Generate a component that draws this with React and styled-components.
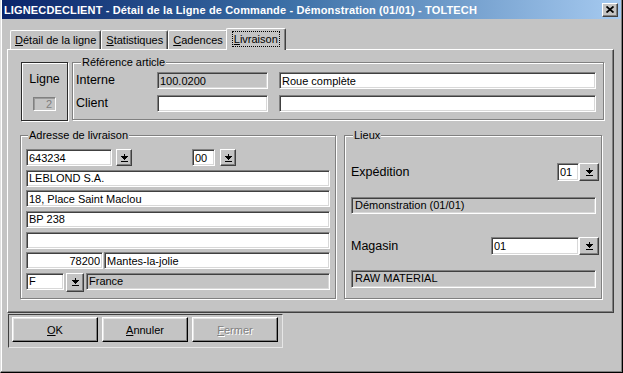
import React from 'react';
import styled, { createGlobalStyle } from 'styled-components';

const FACE = '#c4c4c4';
const SHADOW = '#808080';
const DARK = '#404040';

const Global = createGlobalStyle`
  html, body { margin: 0; padding: 0; background: ${FACE}; }
  body { font-family: "Liberation Sans", Arial, sans-serif; font-size: 11px; color: #000; }
  * { box-sizing: border-box; }
`;

const Window = styled.div`
  width: 623px;
  height: 373px;
  background: ${FACE};
  border-left: 1px solid #dfdfdf;
  border-right: 1px solid #000;
  border-bottom: 1px solid #000;
  box-shadow: inset -1px -1px 0 ${SHADOW}, inset 1px 0 0 #fff;
  padding: 0 1px 1px 1px;
  display: flex;
  flex-direction: column;
`;

const TitleBar = styled.div`
  height: 19px;
  flex: none;
  display: flex;
  align-items: center;
  padding: 0 3px 0 2px;
  background: linear-gradient(to right, #0a246a 0%, #3a6ea5 45%, #a6caf0 100%);
`;

const TitleText = styled.div`
  flex: 1;
  color: #fff;
  font-weight: bold;
  font-size: 11px;
  letter-spacing: 0.14px;
  white-space: nowrap;
`;

const CloseButton = styled.button`
  width: 16px;
  height: 14px;
  padding: 0;
  margin: 0;
  background: ${FACE};
  border: 1px solid;
  border-color: #fff ${DARK} ${DARK} #fff;
  box-shadow: inset -1px -1px 0 ${SHADOW};
  display: flex;
  align-items: center;
  justify-content: center;
`;

const Body = styled.div`
  flex: 1;
  display: flex;
  flex-direction: column;
  padding: 9px 7px 0 5px;
`;

const TabStrip = styled.div`
  display: flex;
  align-items: flex-end;
  height: 21px;
  padding-left: 3px;
  position: relative;
  z-index: 2;
`;

const Tab = styled.div`
  height: ${p => (p.$active ? '22px' : '19px')};
  margin: ${p => (p.$active ? '0 -2px -1px -2px' : '0')};
  padding: ${p => (p.$active ? '0 5px' : '0 4px')};
  background: ${FACE};
  border-top: 1px solid #fff;
  border-left: 1px solid #fff;
  border-right: 1px solid ${DARK};
  box-shadow: inset -1px 0 0 ${SHADOW};
  border-radius: 2px 2px 0 0;
  display: flex;
  align-items: ${p => (p.$active ? 'flex-start' : 'center')};
  padding-top: ${p => (p.$active ? '2px' : '0')};
  font-size: 11px;
  white-space: nowrap;
  position: relative;
  z-index: ${p => (p.$active ? 3 : 1)};
`;

const FocusRect = styled.span`
  border: 1px dotted #000;
  padding: 0 1px;
  line-height: 14px;
`;

const Panel = styled.div`
  height: 264px;
  background: ${FACE};
  border-top: 1px solid #fff;
  border-left: 1px solid #fff;
  border-right: 1px solid ${DARK};
  border-bottom: 1px solid ${DARK};
  box-shadow: inset -1px -1px 0 ${SHADOW};
  padding: 12px 9px 0 13px;
  display: flex;
  flex-direction: column;
  position: relative;
  z-index: 1;
`;

const TopRow = styled.div`
  display: flex;
  gap: 4px;
`;

const LigneBox = styled.div`
  width: 47px;
  height: 59px;
  border: 1px solid #2a2a2a;
  box-shadow: inset 1px 1px 0 #fff, 1px 1px 0 #fff;
  display: flex;
  flex-direction: column;
  align-items: center;
  padding-top: 9px;
`;

const BigLabel = styled.div`
  font-size: 12.5px;
  line-height: 15px;
  white-space: nowrap;
  flex: ${p => (p.$grow ? 1 : 'none')};
`;

const SmallField = styled.div`
  margin-top: 10px;
  width: 23px;
  height: 14px;
  border: 1px solid;
  border-color: ${SHADOW} #fff #fff ${SHADOW};
  box-shadow: inset 1px 1px 0 #9a9a9a;
  color: ${SHADOW};
  text-align: right;
  padding-right: 3px;
  font-size: 11px;
  line-height: 12px;
`;

const GroupBox = styled.div`
  position: relative;
  border: 1px solid ${SHADOW};
  box-shadow: inset 1px 1px 0 #fff, 1px 1px 0 #fff;
  height: ${p => p.$h}px;
  width: ${p => (p.$w ? `${p.$w}px` : 'auto')};
  flex: ${p => (p.$w ? 'none' : 1)};
`;

const Legend = styled.span`
  position: absolute;
  top: -7px;
  left: ${p => p.$left || 7}px;
  padding: 0 1px;
  background: ${FACE};
  font-size: 11px;
  line-height: 13px;
  white-space: nowrap;
`;

const RefGrid = styled.div`
  display: grid;
  grid-template-columns: 70px 111px 1fr;
  grid-auto-rows: 17px;
  column-gap: 11px;
  row-gap: 6px;
  padding: 9px 7px 0 3px;
  align-items: center;
`;

const Field = styled.input`
  display: block;
  height: ${p => p.$h || 17}px;
  width: ${p => (p.$w ? `${p.$w}px` : '100%')};
  flex: ${p => (p.$grow ? '1 1 auto' : 'none')};
  min-width: 0;
  margin: 0;
  margin-left: ${p => p.$ml || 0}px;
  padding: 0 2px;
  font-family: "Liberation Sans", Arial, sans-serif;
  font-size: 11px;
  color: #000;
  text-align: ${p => p.$align || 'left'};
  background: ${p => (p.$off ? FACE : '#fff')};
  border: 1px solid;
  border-color: ${SHADOW} #fff #fff ${SHADOW};
  box-shadow: inset 1px 1px 0 ${DARK}, inset -1px -1px 0 #d8d8d8;
  outline: none;
`;

const BottomRow = styled.div`
  display: flex;
  gap: 8px;
  margin-top: 14px;
  margin-left: -1px;
  margin-right: 2px;
`;

const AddressStack = styled.div`
  display: flex;
  flex-direction: column;
  gap: 3.67px;
  padding: 13px 5px 0 5px;
`;

const Line = styled.div`
  display: flex;
  align-items: flex-start;
  gap: ${p => p.$gap || 0}px;
`;

const DropButton = styled.button`
  flex: none;
  width: ${p => p.$w || 16}px;
  height: ${p => p.$h || 17}px;
  margin: 0;
  margin-left: ${p => p.$ml || 0}px;
  padding: 0;
  background: ${FACE};
  border: 1px solid;
  border-color: #fff ${DARK} ${DARK} #fff;
  box-shadow: inset -1px -1px 0 ${SHADOW};
  display: flex;
  align-items: center;
  justify-content: center;
`;

const LieuxStack = styled.div`
  display: flex;
  flex-direction: column;
  padding: 27px 2px 0 6px;
`;

const PlaceRow = styled.div`
  display: flex;
  align-items: center;
  height: 18px;
  margin-top: ${p => p.$mt || 0}px;
`;

const InfoBox = styled.div`
  height: ${p => p.$h || 17}px;
  margin-top: ${p => p.$mt || 0}px;
  margin-right: 3px;
  border: 1px solid;
  border-color: ${SHADOW} #fff #fff ${SHADOW};
  box-shadow: inset 1px 1px 0 ${DARK}, inset -1px -1px 0 #d8d8d8;
  padding: 0 3px;
  font-size: 11px;
  line-height: 15px;
  white-space: nowrap;
`;

const ButtonFrame = styled.div`
  margin-top: 1px;
  margin-left: 1px;
  width: 275px;
  height: 34px;
  border-top: 1px solid ${DARK};
  border-left: 1px solid ${DARK};
  border-right: 1px solid #e6e6e6;
  border-bottom: 1px solid #e6e6e6;
  display: flex;
  gap: 4px;
  padding: 2px 0 0 3px;
`;

const PushButton = styled.button`
  width: 86px;
  height: 25px;
  margin: 0;
  padding: 0;
  background: ${FACE};
  font-family: "Liberation Sans", Arial, sans-serif;
  font-size: 11px;
  color: ${p => (p.disabled ? SHADOW : '#000')};
  text-shadow: ${p => (p.disabled ? '1px 1px 0 #fff' : 'none')};
  border: 1px solid;
  border-color: #fff #000 #000 #fff;
  box-shadow: inset -1px -1px 0 ${SHADOW}, inset 1px 1px 0 #e4e4e4;
`;

const DropIcon = () => (
  <svg width="7" height="8" viewBox="0 0 7 8" shapeRendering="crispEdges">
    <rect x="3" y="0" width="1" height="2" fill="#000" />
    <polygon points="0,2 7,2 3.5,5.6" fill="#000" />
    <rect x="0" y="7" width="7" height="1" fill="#000" />
  </svg>
);

const CloseIcon = () => (
  <svg width="8" height="7" viewBox="0 0 8 7">
    <path d="M0.5 0.5 L7.5 6.5 M7.5 0.5 L0.5 6.5" stroke="#000" strokeWidth="1.8" />
  </svg>
);

export default function App() {
  return (
    <>
      <Global />
      <Window>
        <TitleBar>
          <TitleText>LIGNECDECLIENT - Détail de la Ligne de Commande - Démonstration (01/01) - TOLTECH</TitleText>
          <CloseButton aria-label="Fermer"><CloseIcon /></CloseButton>
        </TitleBar>
        <Body>
          <TabStrip>
            <Tab><span><u>D</u>étail de la ligne</span></Tab>
            <Tab><span><u>S</u>tatistiques</span></Tab>
            <Tab><span><u>C</u>adences</span></Tab>
            <Tab $active><FocusRect><u>L</u>ivraison</FocusRect></Tab>
          </TabStrip>
          <Panel>
            <TopRow>
              <LigneBox>
                <BigLabel>Ligne</BigLabel>
                <SmallField>2</SmallField>
              </LigneBox>
              <GroupBox $h={58}>
                <Legend $left={8}>Référence article</Legend>
                <RefGrid>
                  <BigLabel>Interne</BigLabel>
                  <Field readOnly $off value="100.0200" />
                  <Field readOnly value="Roue complète" />
                  <BigLabel>Client</BigLabel>
                  <Field readOnly value="" />
                  <Field readOnly value="" />
                </RefGrid>
              </GroupBox>
            </TopRow>
            <BottomRow>
              <GroupBox $w={316} $h={164}>
                <Legend>Adresse de livraison</Legend>
                <AddressStack>
                  <Line>
                    <Field readOnly $w={86} value="643234" />
                    <DropButton $ml={4}><DropIcon /></DropButton>
                    <Field readOnly $w={23} $ml={60} value="00" />
                    <DropButton $ml={5}><DropIcon /></DropButton>
                  </Line>
                  <Field readOnly value="LEBLOND S.A." />
                  <Field readOnly value="18, Place Saint Maclou" />
                  <Field readOnly value="BP 238" />
                  <Field readOnly value="" />
                  <Line $gap={1}>
                    <Field readOnly $w={77} $align="right" value="78200" />
                    <Field readOnly $grow value="Mantes-la-jolie" />
                  </Line>
                  <Line>
                    <Field readOnly $w={38} value="F" />
                    <DropButton $ml={2} $w={18} $h={19}><DropIcon /></DropButton>
                    <Field readOnly $off $grow $ml={2} value="France" />
                  </Line>
                </AddressStack>
              </GroupBox>
              <GroupBox $h={164}>
                <Legend $left={8}>Lieux</Legend>
                <LieuxStack>
                  <PlaceRow>
                    <BigLabel $grow>Expédition</BigLabel>
                    <Field readOnly $w={22} $h={18} value="01" />
                    <DropButton $w={20} $h={18}><DropIcon /></DropButton>
                  </PlaceRow>
                  <InfoBox $mt={16}>Démonstration (01/01)</InfoBox>
                  <PlaceRow $mt={23}>
                    <BigLabel $grow>Magasin</BigLabel>
                    <Field readOnly $w={88} $h={18} value="01" />
                    <DropButton $w={20} $h={18}><DropIcon /></DropButton>
                  </PlaceRow>
                  <InfoBox $mt={15} $h={18}>RAW MATERIAL</InfoBox>
                </LieuxStack>
              </GroupBox>
            </BottomRow>
          </Panel>
          <ButtonFrame>
            <PushButton><u>O</u>K</PushButton>
            <PushButton><u>A</u>nnuler</PushButton>
            <PushButton disabled><u>F</u>ermer</PushButton>
          </ButtonFrame>
        </Body>
      </Window>
    </>
  );
}
